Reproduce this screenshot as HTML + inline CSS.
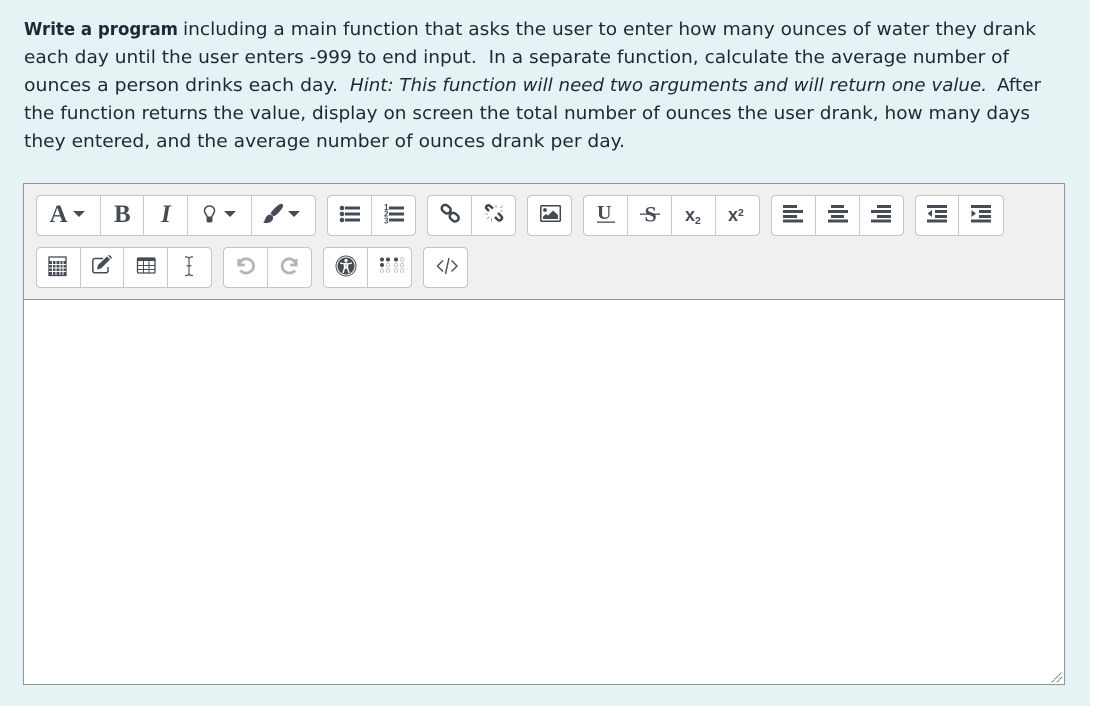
<!DOCTYPE html>
<html><head><meta charset="utf-8"><style>
html,body{margin:0;padding:0;background:#fff;width:1099px;height:713px;overflow:hidden}
svg{display:block}
.t{font-family:"DejaVu Sans","Liberation Sans",sans-serif;font-size:18px;fill:#1d2a36}
.b{font-weight:bold}.i{font-style:italic}
.g{fill:#fff;stroke:#c4c4c4;stroke-width:1;filter:drop-shadow(0 .7px 0 #c8c8c8)}
.s{stroke:#c8c8c8;stroke-width:1}
.ic{fill:#454c55}
.l{stroke:#454c55;fill:none}
.f{font-family:"Liberation Serif",serif;fill:#454c55}
.x{font-family:"Liberation Sans",sans-serif;fill:#454c55;font-weight:bold}
</style></head><body>
<svg width="1099" height="713" viewBox="0 0 1099 713" xmlns="http://www.w3.org/2000/svg">
<rect x="0" y="0" width="1090" height="706" fill="#e7f2f5"/>
<text class="t" font-weight="bold" x="24" y="35" textLength="154" lengthAdjust="spacingAndGlyphs">Write a program</text>
<text class="t" x="183" y="35" textLength="853" lengthAdjust="spacingAndGlyphs">including a main function that asks the user to enter how many ounces of water they drank</text>
<text class="t" x="24" y="63" textLength="985" lengthAdjust="spacingAndGlyphs" xml:space="preserve">each day until the user enters -999 to end input.  In a separate function, calculate the average number of</text>
<text class="t" x="24" y="91" textLength="314" lengthAdjust="spacingAndGlyphs">ounces a person drinks each day.</text>
<text class="t i" x="350" y="91" textLength="637" lengthAdjust="spacingAndGlyphs">Hint: This function will need two arguments and will return one value.</text>
<text class="t" x="997" y="91" textLength="44" lengthAdjust="spacingAndGlyphs">After</text>
<text class="t" x="24" y="119" textLength="1006" lengthAdjust="spacingAndGlyphs">the function returns the value, display on screen the total number of ounces the user drank, how many days</text>
<text class="t" x="24" y="147" textLength="601" lengthAdjust="spacingAndGlyphs">they entered, and the average number of ounces drank per day.</text>

<rect x="23.500" y="183.500" width="1041" height="501" fill="#fff" stroke="#8f959e"/>
<rect x="24" y="184" width="1040" height="115.500" fill="#f0f0f0"/>
<line x1="24" y1="299.500" x2="1064" y2="299.500" stroke="#8f959e"/>

<!-- groups row 1 -->
<rect class="g" x="36.500" y="195.500" width="279" height="40" rx="4"/>
<path class="s" d="M100.500 196V235M143.500 196V235M187.500 196V235M251.500 196V235"/>
<rect class="g" x="327.500" y="195.500" width="88" height="40" rx="4"/>
<path class="s" d="M371.500 196V235"/>
<rect class="g" x="427.500" y="195.500" width="88" height="40" rx="4"/>
<path class="s" d="M471.500 196V235"/>
<rect class="g" x="527.500" y="195.500" width="44" height="40" rx="4"/>
<rect class="g" x="583.500" y="195.500" width="176" height="40" rx="4"/>
<path class="s" d="M627.500 196V235M671.500 196V235M715.500 196V235"/>
<rect class="g" x="771.500" y="195.500" width="132" height="40" rx="4"/>
<path class="s" d="M815.500 196V235M859.500 196V235"/>
<rect class="g" x="915.500" y="195.500" width="88" height="40" rx="4"/>
<path class="s" d="M958.500 196V235"/>
<!-- groups row 2 -->
<rect class="g" x="36.500" y="247.500" width="175" height="40" rx="4"/>
<path class="s" d="M80.500 248V287M123.500 248V287M167.500 248V287"/>
<rect class="g" x="223.500" y="247.500" width="88" height="40" rx="4"/>
<path class="s" d="M267.500 248V287"/>
<rect class="g" x="323.500" y="247.500" width="88" height="40" rx="4"/>
<path class="s" d="M367.500 248V287"/>
<rect class="g" x="423.500" y="247.500" width="44" height="40" rx="4"/>

<!-- Font -->
<text class="f" x="49.500" y="222" font-size="25" font-weight="bold">A</text>
<path class="ic" d="M73 211H85L79 217Z"/>
<text class="f" x="114" y="222" font-size="25" font-weight="bold">B</text>
<text class="f" x="161" y="222" font-size="25" font-weight="bold" font-style="italic">I</text>
<!-- bulb -->
<path d="M209.500 206C206.500 206 204.500 208.200 204.500 210.800C204.500 213.500 207 215 207.500 217.500H211.500C212 215 214.500 213.500 214.500 210.800C214.500 208.200 212.500 206 209.500 206Z" fill="none" stroke="#454c55" stroke-width="1.500"/>
<rect class="ic" x="206.500" y="216.500" width="6" height="6" rx="2"/>
<path class="ic" d="M224 211H236L230 217Z"/>
<!-- brush -->
<path class="ic" d="M280 204C282 203.500 283.500 204.500 283 206.500C281.500 210 277 215 273.500 216.500L270.500 213.500C272.500 210 276.500 206 280 204Z"/>
<path class="ic" d="M269.500 214.500C272 214.800 273.500 216.500 273 219C272 222.500 267 224 263 222.500C265.500 221.500 264.500 216 269.500 214.500Z"/>
<path class="ic" d="M288 211H300L294 217Z"/>
<!-- bullets -->
<g class="ic"><circle cx="342" cy="208" r="2.300"/><circle cx="342" cy="214" r="2.300"/><circle cx="342" cy="220" r="2.300"/>
<rect x="345" y="206.500" width="15" height="3"/><rect x="345" y="212.500" width="15" height="3"/><rect x="345" y="218.500" width="15" height="3"/>
<rect x="389" y="206.500" width="15" height="3"/><rect x="389" y="212.500" width="15" height="3"/><rect x="389" y="218.500" width="15" height="3"/></g>
<g class="x" font-size="8"><text x="384" y="210">1</text><text x="384" y="216.500">2</text><text x="384" y="223.500">3</text></g>
<!-- link -->
<g fill="none" stroke="#3f4650" stroke-width="2.500">
<rect x="441.500" y="205.500" width="9.500" height="7" rx="3.500" transform="rotate(40 446 209)"/>
<rect x="449.500" y="213.500" width="9.500" height="7" rx="3.500" transform="rotate(40 454 217)"/>
<path d="M449 211.500L451.500 214"/>
<!-- unlink -->
<path d="M489 211L486.500 208.500C485 207 487.500 204.500 489.500 205.500L493 208.500"/>
<path d="M498 213L501.500 216.500C503 218.500 500.500 221.500 498 220L495 217"/>
</g>
<path d="M496 205V208M500 208L503 206M503 211H500M485 214H488M487 219L489.500 216.500M491.500 218V222" stroke="#a9adb3" stroke-width="1" fill="none"/>
<!-- image -->
<rect x="540.800" y="205.800" width="19.500" height="15.500" rx="1" fill="none" stroke="#3f4650" stroke-width="1.500"/>
<circle cx="545" cy="210" r="1.900" class="ic"/>
<path class="ic" d="M543 219V216.500L546 214L548 215.500L553 210.500L558 215V219Z"/>
<!-- U S -->
<text class="f" x="597" y="219" font-size="20" font-weight="bold">U</text>
<rect class="ic" x="597" y="221.500" width="18" height="1.300"/>
<text class="f" x="644.500" y="221.500" font-size="22" font-weight="bold">S</text>
<rect class="ic" x="640" y="213.500" width="20" height="1.300"/>
<text class="x" x="685" y="221" font-size="18">x</text><text class="x" x="695" y="224" font-size="10.500">2</text>
<text class="x" x="728" y="221" font-size="18">x</text><text class="x" x="738" y="216" font-size="10.500">2</text>
<!-- align -->
<g class="ic">
<rect x="783" y="205" width="14" height="3"/><rect x="783" y="210" width="20" height="3"/><rect x="783" y="215" width="14" height="3"/><rect x="783" y="219.500" width="20" height="3"/>
<rect x="831" y="205" width="13" height="3"/><rect x="828" y="210" width="20" height="3"/><rect x="831" y="215" width="13" height="3"/><rect x="828" y="219.500" width="20" height="3"/>
<rect x="877" y="205" width="14" height="3"/><rect x="871" y="210" width="20" height="3"/><rect x="877" y="215" width="14" height="3"/><rect x="871" y="219.500" width="20" height="3"/>
<rect x="927" y="205" width="20" height="3"/><rect x="935" y="210" width="12" height="3"/><rect x="935" y="215" width="12" height="3"/><rect x="927" y="219.500" width="20" height="3"/><path d="M932 210V217L927.500 213.500Z"/>
<rect x="971" y="205" width="20" height="3"/><rect x="979" y="210" width="12" height="3"/><rect x="979" y="215" width="12" height="3"/><rect x="971" y="219.500" width="20" height="3"/><path d="M971.500 210V217L976 213.500Z"/>
</g>
<!-- calculator -->
<rect x="49" y="257" width="17" height="18.500" fill="none" stroke="#454c55" stroke-width="1.300"/>
<path d="M49 261H66V275H49Z" fill="#454c55"/>
<path d="M49 264.500H66M49 268H66M49 271.500H66M52.500 261V275M56 261V275M60 261V275M63 261V275" stroke="#fff" stroke-width="1"/>
<!-- edit -->
<path d="M103 258.500H95C93.500 258.500 92.800 259.500 92.800 261V270.500C92.800 272 93.500 272.800 95 272.800H106C107.500 272.800 108 272 108 270.500V267" fill="none" stroke="#454c55" stroke-width="1.500"/>
<path class="ic" d="M98 265L107 256.500L110 259.500L101 268.500L97 269.500Z"/>
<path class="ic" d="M108 255.500L109.500 255L112 257.500L111 259Z"/>
<!-- table -->
<rect x="137.500" y="258" width="17.500" height="15" rx="1" fill="none" stroke="#454c55" stroke-width="1.300"/>
<rect class="ic" x="137" y="258" width="18" height="3"/>
<path d="M137.500 265.500H155M137.500 269.500H155M143.500 261V273M149 261V273" stroke="#454c55" stroke-width="1"/>
<!-- I cursor -->
<path d="M185 256.800C187 256.800 188.500 257 189 258.500C189.500 257 191 256.800 193 256.800M189 258.500V274C188.500 275.300 187 275.600 185 275.600M189 274C189.500 275.300 191 275.600 193 275.600M186.500 265.800H191.500" fill="none" stroke="#454c55" stroke-width="1.100"/>
<!-- undo redo -->
<path d="M238.800 259V265H244.800M239 264.500C240.300 260.800 243 258.800 246 258.800C250.200 258.800 253.600 262.100 253.600 266C253.600 269.900 250.200 273 246 273C243.800 273 241.800 272 240.400 270.400" fill="none" stroke="#b5b5b5" stroke-width="2.800"/>
<path d="M296.200 259V265H290.200M296 264.500C294.700 260.800 292 258.800 289.500 258.800C285.300 258.800 282.200 262.100 282.200 266C282.200 269.900 285.300 273 289.500 273C291.700 273 293.700 272 295.100 270.400" fill="none" stroke="#b5b5b5" stroke-width="2.800"/>
<!-- accessibility -->
<circle cx="346" cy="266" r="10" fill="none" stroke="#454c55" stroke-width="1"/>
<circle cx="346" cy="266" r="8.500" class="ic"/>
<circle cx="346" cy="260.500" r="1.600" fill="#fff"/>
<path d="M340 263L344.500 264V268L343 273M352 263L347.500 264V268L349 273M344.500 267.500H347.500M345 263.500H347V268H345Z" fill="none" stroke="#fff" stroke-width="1.400"/>
<!-- braille -->
<g class="ic"><circle cx="382" cy="259.500" r="2"/><circle cx="388" cy="259.500" r="2"/><circle cx="396" cy="259.500" r="2"/><circle cx="382" cy="265" r="2"/></g>
<g fill="none" stroke="#b4b8bd" stroke-width="0.800"><circle cx="402" cy="259.500" r="1.800"/><circle cx="388" cy="265" r="1.800"/><circle cx="396" cy="265" r="1.800"/><circle cx="402" cy="265" r="1.800"/><circle cx="382" cy="270.500" r="1.800"/><circle cx="388" cy="270.500" r="1.800"/><circle cx="396" cy="270.500" r="1.800"/><circle cx="402" cy="270.500" r="1.800"/></g>
<!-- code -->
<path d="M443 260.500L437.500 266L443 271.500M451.500 260.500L457 266L451.500 271.500M449 258L445.500 274" fill="none" stroke="#454c55" stroke-width="1.400"/>
<!-- resize handle -->
<path d="M1052 682L1062 672M1057 682L1062 677" stroke="#555" stroke-width="1.100" stroke-dasharray="1.200 0.800" fill="none"/>
</svg>
</body></html>
